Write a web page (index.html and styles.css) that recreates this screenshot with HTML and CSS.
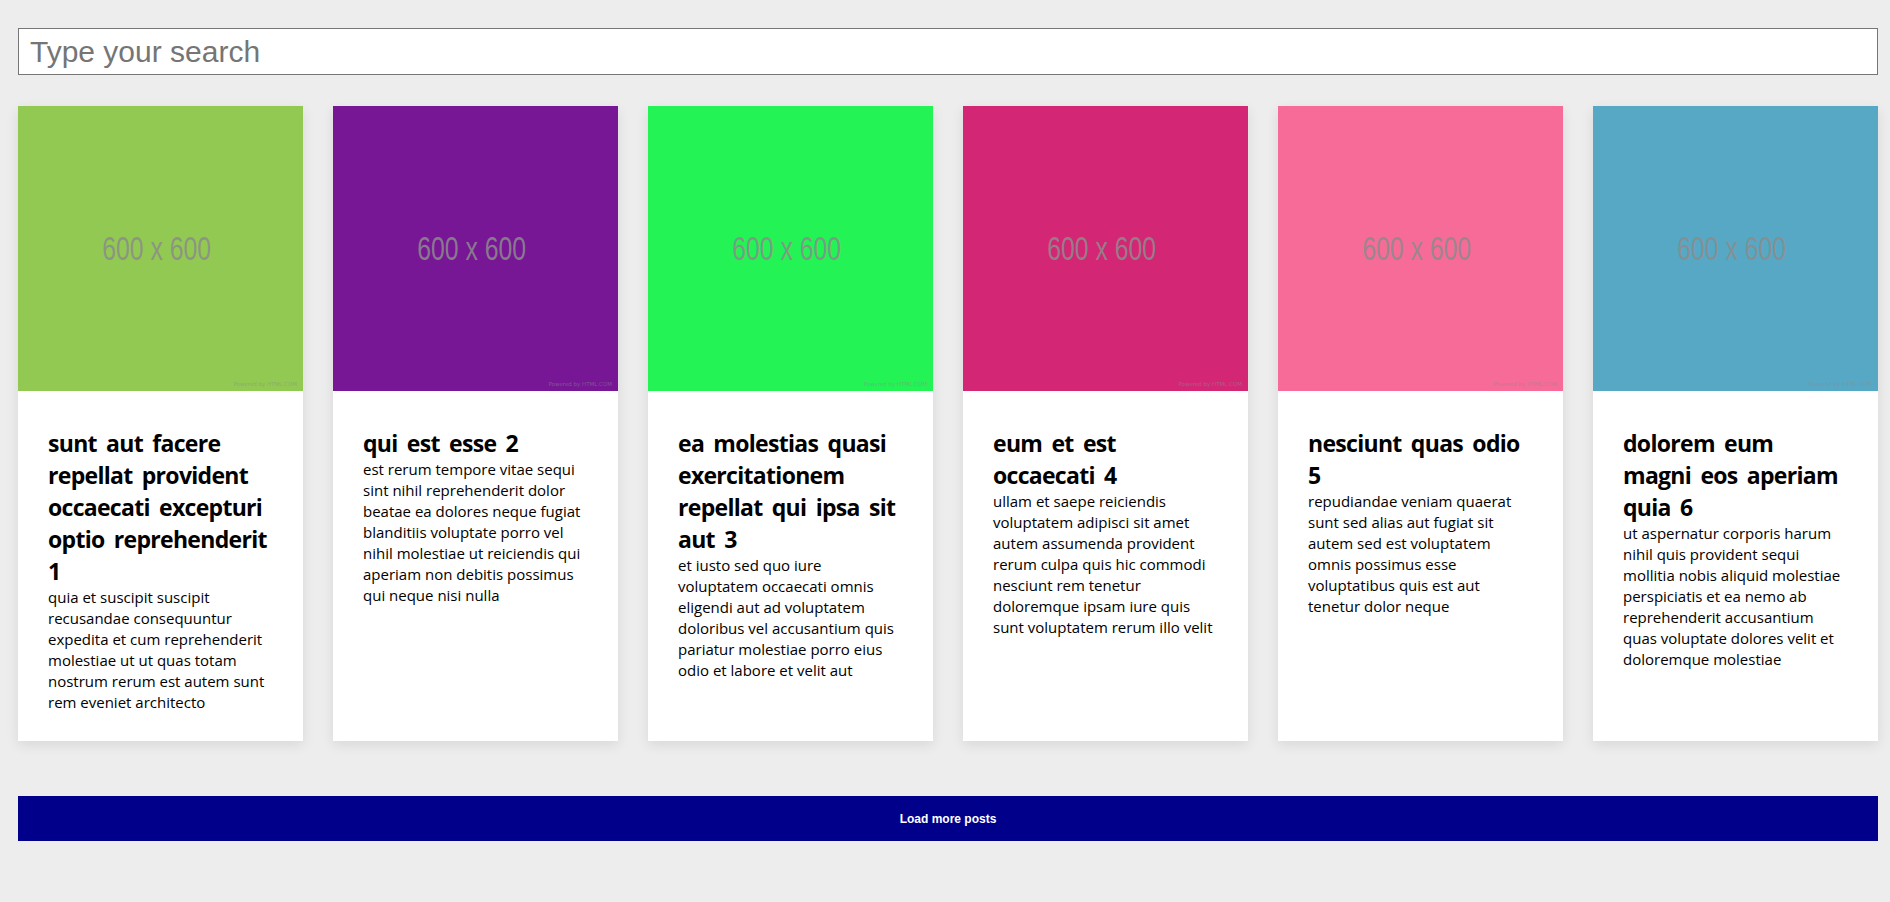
FILE: index.html
```html
<!DOCTYPE html>
<html lang="en">
<head>
<meta charset="utf-8">
<title>Posts</title>
<link rel="stylesheet" href="styles.css">
</head>
<body>
<div class="page">
  <input class="search" type="text" placeholder="Type your search">
  <div class="grid">
    <article class="card">
      <div class="thumb" style="background:#92c952"><span class="size">600 x 600</span><span class="powered">Powered by HTML.COM</span></div>
      <div class="content">
        <h2 class="title">sunt aut facere repellat provident occaecati excepturi optio reprehenderit 1</h2>
        <p class="body">quia et suscipit suscipit recusandae consequuntur expedita et cum reprehenderit molestiae ut ut quas totam nostrum rerum est autem sunt rem eveniet architecto</p>
      </div>
    </article>
    <article class="card">
      <div class="thumb" style="background:#771796"><span class="size">600 x 600</span><span class="powered">Powered by HTML.COM</span></div>
      <div class="content">
        <h2 class="title">qui est esse 2</h2>
        <p class="body">est rerum tempore vitae sequi sint nihil reprehenderit dolor beatae ea dolores neque fugiat blanditiis voluptate porro vel nihil molestiae ut reiciendis qui aperiam non debitis possimus qui neque nisi nulla</p>
      </div>
    </article>
    <article class="card">
      <div class="thumb" style="background:#24f355"><span class="size">600 x 600</span><span class="powered">Powered by HTML.COM</span></div>
      <div class="content">
        <h2 class="title">ea molestias quasi exercitationem repellat qui ipsa sit aut 3</h2>
        <p class="body">et iusto sed quo iure voluptatem occaecati omnis eligendi aut ad voluptatem doloribus vel accusantium quis pariatur molestiae porro eius odio et labore et velit aut</p>
      </div>
    </article>
    <article class="card">
      <div class="thumb" style="background:#d32776"><span class="size">600 x 600</span><span class="powered">Powered by HTML.COM</span></div>
      <div class="content">
        <h2 class="title">eum et est occaecati 4</h2>
        <p class="body">ullam et saepe reiciendis voluptatem adipisci sit amet autem assumenda provident rerum culpa quis hic commodi nesciunt rem tenetur doloremque ipsam iure quis sunt voluptatem rerum illo velit</p>
      </div>
    </article>
    <article class="card">
      <div class="thumb" style="background:#f66b97"><span class="size">600 x 600</span><span class="powered">Powered by HTML.COM</span></div>
      <div class="content">
        <h2 class="title">nesciunt quas odio 5</h2>
        <p class="body">repudiandae veniam quaerat sunt sed alias aut fugiat sit autem sed est voluptatem omnis possimus esse voluptatibus quis est aut tenetur dolor neque</p>
      </div>
    </article>
    <article class="card">
      <div class="thumb" style="background:#56a8c5"><span class="size">600 x 600</span><span class="powered">Powered by HTML.COM</span></div>
      <div class="content">
        <h2 class="title">dolorem eum magni eos aperiam quia 6</h2>
        <p class="body">ut aspernatur corporis harum nihil quis provident sequi mollitia nobis aliquid molestiae perspiciatis et ea nemo ab reprehenderit accusantium quas voluptate dolores velit et doloremque molestiae</p>
      </div>
    </article>
  </div>
  <button class="more" type="button">Load more posts</button>
</div>
</body>
</html>
```
FILE: styles.css
```css
html, body {
  margin: 0;
  padding: 0;
  background: #ededed;
}

.page {
  padding: 28px 12px 0 18px;
  font-family: "Open Sans", "Noto Sans", sans-serif;
  color: #000;
}

.search {
  display: block;
  width: 100%;
  box-sizing: border-box;
  height: 47px;
  margin: 0;
  padding: 0 11px;
  border: 1px solid #767676;
  background: #fff;
  font-family: "Liberation Sans", Arial, sans-serif;
  font-size: 30px;
  color: #000;
  outline: none;
}

.search::placeholder {
  color: #757575;
}

.grid {
  display: grid;
  grid-template-columns: repeat(6, 1fr);
  gap: 30px;
  margin-top: 31px;
}

.card {
  background: #fff;
  box-shadow: 0 4px 12px rgba(0, 0, 0, 0.09);
  display: flex;
  flex-direction: column;
}

.thumb {
  position: relative;
  aspect-ratio: 1 / 1;
  display: flex;
  align-items: center;
  justify-content: center;
  overflow: hidden;
}

.size {
  font-family: "Liberation Sans", Arial, sans-serif;
  font-size: 33.5px;
  color: rgba(140, 140, 140, 0.85);
  transform: scaleX(0.74);
  white-space: nowrap;
  margin-left: -8px;
}

.powered {
  position: absolute;
  right: 6px;
  bottom: 4px;
  font-family: "DejaVu Sans", sans-serif;
  font-size: 5.5px;
  color: rgba(140, 140, 140, 0.55);
  white-space: nowrap;
}

.content {
  padding: 36px 30px 28px;
}

.title {
  margin: 0;
  font-size: 23px;
  line-height: 32px;
  font-weight: 700;
  letter-spacing: -0.7px;
  word-spacing: 4px;
}

.body {
  margin: 0;
  font-size: 15px;
  line-height: 21px;
}

.more {
  display: block;
  width: 100%;
  height: 45px;
  margin: 55px 0 0;
  border: none;
  background: #00008b;
  color: #fff;
  font-family: "Liberation Sans", Arial, sans-serif;
  font-size: 12px;
  font-weight: 700;
  cursor: pointer;
}
```
